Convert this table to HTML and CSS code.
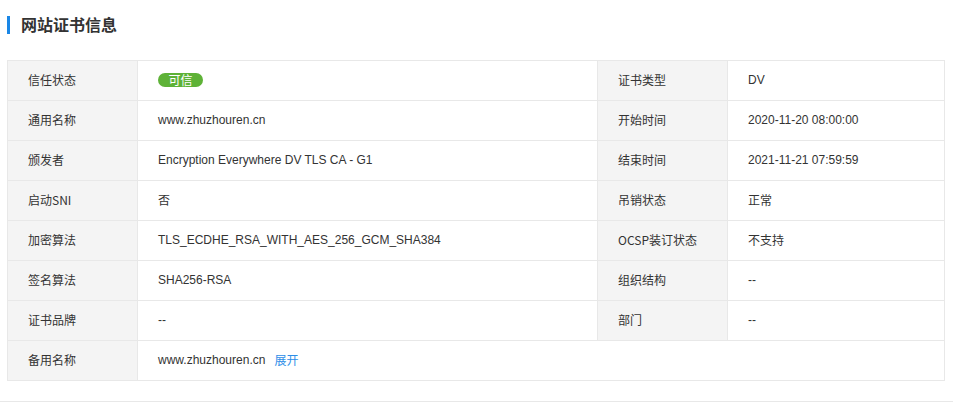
FILE: index.html
```html
<!DOCTYPE html>
<html lang="zh-CN">
<head>
<meta charset="utf-8">
<link rel="stylesheet" href="styles.css">
</head>
<body>
<div class="panel">
  <h2 class="title">网站证书信息</h2>
  <div class="grid">
    <div class="lbl">信任状态</div><div class="val"><span class="badge">可信</span></div>
    <div class="lbl">证书类型</div><div class="val last">DV</div>

    <div class="lbl">通用名称</div><div class="val">www.zhuzhouren.cn</div>
    <div class="lbl">开始时间</div><div class="val last">2020-11-20 08:00:00</div>

    <div class="lbl">颁发者</div><div class="val">Encryption Everywhere DV TLS CA - G1</div>
    <div class="lbl">结束时间</div><div class="val last">2021-11-21 07:59:59</div>

    <div class="lbl">启动SNI</div><div class="val">否</div>
    <div class="lbl">吊销状态</div><div class="val last">正常</div>

    <div class="lbl">加密算法</div><div class="val">TLS_ECDHE_RSA_WITH_AES_256_GCM_SHA384</div>
    <div class="lbl">OCSP装订状态</div><div class="val last">不支持</div>

    <div class="lbl">签名算法</div><div class="val">SHA256-RSA</div>
    <div class="lbl">组织结构</div><div class="val last">--</div>

    <div class="lbl">证书品牌</div><div class="val">--</div>
    <div class="lbl">部门</div><div class="val last">--</div>

    <div class="lbl">备用名称</div><div class="val span3 last">www.zhuzhouren.cn<a class="more" href="#">展开</a></div>
  </div>
</div>
</body>
</html>
```
FILE: styles.css
```css
html, body {
  margin: 0;
  padding: 0;
  background: #fff;
}
body {
  font-family: "Liberation Sans", Arial, "Noto Sans CJK SC", sans-serif;
  font-size: 12px;
  color: #333;
}
.panel {
  padding: 16px 8px 20px 7px;
  border-bottom: 1px solid #e8e8e8;
}
.title {
  margin: 0 0 26px 0;
  height: 18px;
  box-sizing: border-box;
  line-height: 16px;
  padding-bottom: 2px;
  border-left: 3px solid #1a87e6;
  padding-left: 11px;
  font-size: 16px;
  font-weight: bold;
  color: #333;
  font-family: "Noto Sans CJK SC", sans-serif;
}
.grid {
  display: grid;
  grid-template-columns: 130px 460px 130px 216px;
  border: 1px solid #e8e8e8;
  border-bottom: none;
}
.lbl, .val {
  height: 40px;
  box-sizing: border-box;
  border-bottom: 1px solid #e8e8e8;
  border-right: 1px solid #e8e8e8;
  padding-left: 20px;
  padding-bottom: 2px;
  display: flex;
  align-items: center;
  white-space: nowrap;
}
.lbl {
  background: #f4f4f4;
  font-family: "Noto Sans CJK SC", sans-serif;
}
.val.last {
  border-right: none;
}
.span3 {
  grid-column: span 3;
}
.badge {
  display: inline-block;
  width: 45px;
  height: 14px;
  line-height: 14px;
  border-radius: 7px;
  background: #5eb237;
  color: #fff;
  text-align: center;
  font-family: "Noto Sans CJK SC", sans-serif;
  font-size: 12px;
}
.more {
  margin-left: 9px;
  color: #2d8ee8;
  text-decoration: none;
  font-family: "Noto Sans CJK SC", sans-serif;
}
```
